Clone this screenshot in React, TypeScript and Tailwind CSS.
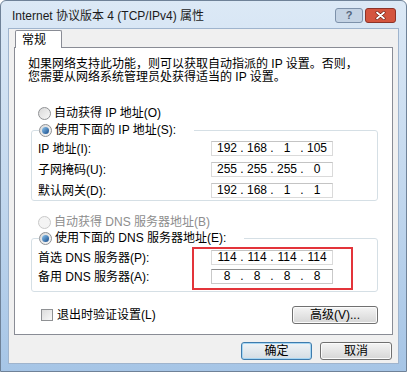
import React from "react";

type RadioProps = {
  checked?: boolean;
  disabled?: boolean;
  label: string;
};

function Radio({ checked, disabled, label }: RadioProps) {
  return (
    <div className="flex h-[16px] items-center">
      <span
        className={`flex h-[13px] w-[13px] items-center justify-center rounded-full border ${
          disabled ? "border-[#c9c9c9] bg-[#f4f4f4]" : "border-[#8f9194] bg-linear-to-br from-[#d9d9d9] to-[#f8f8f8]"
        }`}
      >
        {checked && (
          <span className="h-[7px] w-[7px] rounded-full bg-linear-to-br from-[#8fc7ef] to-[#154b8a]" />
        )}
      </span>
      <span className={`ml-[3px] whitespace-pre ${disabled ? "text-[#8d8d8d]" : "text-black"}`}>{label}</span>
    </div>
  );
}

function IpField({ parts, dark }: { parts: string[]; dark?: boolean }) {
  return (
    <div
      className={`flex h-[15px] w-[122px] items-center border bg-white pl-[2px] leading-[13px] ${
        dark ? "border-[#c9c9c9] border-t-[#8e8e8e]" : "border-[#dadada] border-t-[#c4c4c4]"
      }`}
    >
      {parts.map((p, i) => (
        <React.Fragment key={i}>
          {i > 0 && <span className="w-[4px] text-center">.</span>}
          <span className="w-[26px] text-center">{p}</span>
        </React.Fragment>
      ))}
    </div>
  );
}

function Row({ label, parts, dark }: { label: string; parts: string[]; dark?: boolean }) {
  return (
    <div className="flex h-[15px] items-center">
      <span className="w-[173px] whitespace-pre">{label}</span>
      <IpField parts={parts} dark={dark} />
    </div>
  );
}

function WinButton({ children, primary, width }: { children: React.ReactNode; primary?: boolean; width: string }) {
  return (
    <button
      className={`${width} flex h-[18px] items-center justify-center rounded-[3px] border bg-linear-to-b ${
        primary
          ? "border-[#3d7bad] from-[#f0f4f7] to-[#d4dde4] shadow-[inset_0_0_0_1px_#a6d6f3]"
          : "border-[#707070] from-[#f4f4f4] to-[#d6d6d6] shadow-[inset_0_0_0_1px_#fbfbfb]"
      }`}
    >
      {children}
    </button>
  );
}

export default function App() {
  return (
    <div className="relative flex h-[372px] w-[407px] flex-col overflow-hidden rounded-t-[6px] border border-[#6f8298] bg-linear-to-b from-[#dce9f6] via-[#c3d8ee] to-[#a6c5e6] font-['Liberation_Sans','Noto_Sans_CJK_SC',sans-serif] text-[12px] leading-[14px] text-black">
      {/* title bar */}
      <div className="flex h-[27px] items-start">
        <div className="pl-[11px] pt-[8px] text-[#1b1b1b]">Internet 协议版本 4 (TCP/IPv4) 属性</div>
        <div className="ml-auto flex gap-[2px] pr-[10px] pt-[7px]">
          <div className="flex h-[15px] w-[28px] items-center justify-center rounded-[3px] border border-[#7d91aa] bg-[#c4d3e4] text-[11px] font-bold leading-none text-[#55667c]">
            ?
          </div>
          <div className="flex h-[15px] w-[31px] items-center justify-center rounded-[3px] border border-[#8c3328] bg-[#d4553f]">
            <svg width="11" height="9" viewBox="0 0 11 9">
              <path d="M2 1.5 L9 7.5 M9 1.5 L2 7.5" stroke="#6a1e14" strokeWidth="3" strokeLinecap="round" />
              <path d="M2 1.5 L9 7.5 M9 1.5 L2 7.5" stroke="#ffffff" strokeWidth="1.8" strokeLinecap="round" />
            </svg>
          </div>
        </div>
      </div>

      {/* client area */}
      <div className="mx-[7px] flex h-[336px] flex-col border border-[#9fb4cd] bg-[#f0f0f0] px-[5px] pt-[1px]">
        <div className="relative z-10 -mb-px ml-[1px] flex h-[18px] w-[47px] items-center rounded-t-[2px] border border-b-0 border-[#898c95] bg-white pl-[6px]">
          常规
        </div>
        <div className="flex h-[288px] flex-col border border-[#898c95] bg-white">
          <p className="pl-[13px] pt-[10px] leading-[13px]">
            如果网络支持此功能，则可以获取自动指派的 IP 设置。否则，
            <br />
            您需要从网络系统管理员处获得适当的 IP 设置。
          </p>

          <div className="ml-[23px] mt-[21px]">
            <Radio label="自动获得 IP 地址(O)" />
          </div>

          <fieldset className="ml-[16px] mr-[14px] mt-[1px] rounded-[3px] border border-[#d5dfe5] px-[6px] pb-[2px]">
            <legend className="ml-[1px] pr-[18px]">
              <Radio checked label="使用下面的 IP 地址(S):" />
            </legend>
            <div className="flex flex-col gap-[6px] pt-[3px]">
              <Row label="IP 地址(I):" parts={["192", "168", "1", "105"]} />
              <Row label="子网掩码(U):" parts={["255", "255", "255", "0"]} />
              <Row label="默认网关(D):" parts={["192", "168", "1", "1"]} />
            </div>
          </fieldset>

          <div className="ml-[23px] mt-[13px]">
            <Radio disabled label="自动获得 DNS 服务器地址(B)" />
          </div>

          <fieldset className="ml-[16px] mr-[14px] rounded-[3px] border border-[#d5dfe5] px-[6px] pb-[7px]">
            <legend className="ml-[1px] pr-[18px]">
              <Radio checked label="使用下面的 DNS 服务器地址(E):" />
            </legend>
            <div className="flex flex-col gap-[4px] pt-[4px]">
              <Row label="首选 DNS 服务器(P):" parts={["114", "114", "114", "114"]} />
              <Row label="备用 DNS 服务器(A):" parts={["8", "8", "8", "8"]} dark />
            </div>
          </fieldset>

          <div className="ml-[26px] mr-[14px] mt-[14px] flex h-[17px] items-center">
            <span className="h-[12px] w-[12px] border border-[#8f9194] bg-linear-to-br from-[#dcdcdc] to-[#f8f8f8]" />
            <span className="ml-[4px]">退出时验证设置(L)</span>
            <div className="ml-auto">
              <WinButton width="w-[86px]">高级(V)...</WinButton>
            </div>
          </div>
        </div>

        <div className="mt-[7px] flex justify-end gap-[8px] pr-[1px]">
          <WinButton primary width="w-[71px]">
            确定
          </WinButton>
          <WinButton width="w-[72px]">取消</WinButton>
        </div>
      </div>

      {/* annotation */}
      <div className="absolute left-[191px] top-[246px] h-[43px] w-[161px] border-2 border-[#e3343a]" />
    </div>
  );
}
